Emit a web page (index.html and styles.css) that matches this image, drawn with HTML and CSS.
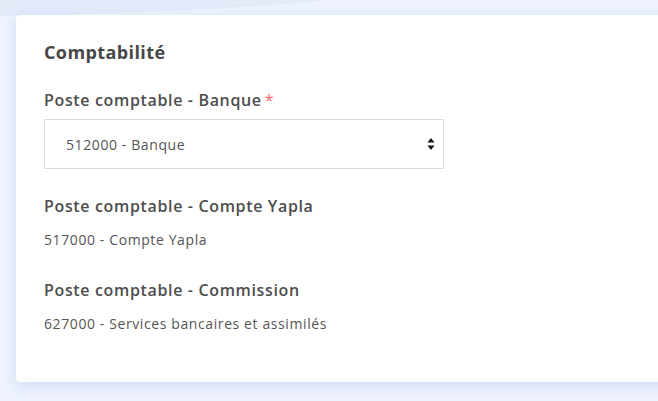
FILE: index.html
```html
<!DOCTYPE html>
<html lang="fr">
<head>
<meta charset="utf-8">
<link rel="stylesheet" href="styles.css">
</head>
<body>
<div class="page">
  <svg class="bg-curve" width="658" height="60" viewBox="0 0 658 60" preserveAspectRatio="none"><path d="M0 0 H330 C250 8 120 14 0 16 Z" fill="#e3ebf9"/></svg>
  <section class="card">
    <h2 class="card-title">Comptabilité</h2>
    <div class="field field-select">
      <label class="label label-select">Poste comptable - Banque<span class="req">*</span></label>
      <div class="select">
        <span class="select-value">512000 - Banque</span>
        <svg class="select-arrows" width="8" height="14" viewBox="0 0 8 14"><path d="M4 1 L7.5 5.5 H0.5 Z" fill="#111"/><path d="M4 13 L7.5 8.5 H0.5 Z" fill="#111"/></svg>
      </div>
    </div>
    <div class="field field-first">
      <div class="label">Poste comptable - Compte Yapla</div>
      <div class="value">517000 - Compte Yapla</div>
    </div>
    <div class="field">
      <div class="label">Poste comptable - Commission</div>
      <div class="value">627000 - Services bancaires et assimilés</div>
    </div>
  </section>
</div>
</body>
</html>
```

FILE: styles.css
```css
html, body {
  margin: 0;
  padding: 0;
}
body {
  width: 658px;
  height: 401px;
  overflow: hidden;
  background: #eef3fd;
  font-family: "Open Sans", "Lato", sans-serif;
  color: #4a4a4a;
}
.page {
  position: relative;
  padding: 15px 0 0 16px;
  height: 401px;
  box-sizing: border-box;
}
.bg-curve {
  position: absolute;
  left: 0;
  top: 0;
}
.card {
  position: relative;
  background: #fff;
  border-radius: 4px;
  box-shadow: 0 4px 14px rgba(170, 190, 235, 0.45);
  width: 660px;
  height: 367px;
  box-sizing: border-box;
  padding: 25px 24px 0 28px;
}
.card-title {
  margin: 0 0 25px 0;
  font-size: 18px;
  font-weight: 700;
  line-height: 24px;
  letter-spacing: 0.4px;
  color: #474747;
}
.field-select {
  margin-bottom: 26px;
}
.field-first {
  margin-bottom: 29px;
}
.label {
  display: block;
  font-size: 16px;
  font-weight: 600;
  line-height: 22px;
  letter-spacing: 0.65px;
  color: #4d4d4d;
  margin-bottom: 13px;
}
.label-select {
  margin-bottom: 8px;
}
.req {
  color: #ff6b6b;
  margin-left: 3px;
  font-weight: 400;
}
.select {
  width: 400px;
  height: 50px;
  box-sizing: border-box;
  border: 1px solid #d6dde9;
  display: flex;
  align-items: center;
  justify-content: space-between;
  padding: 0 8px 0 21px;
}
.select-value {
  font-size: 14px;
  letter-spacing: 0.6px;
  color: #555;
}
.value {
  font-size: 14px;
  letter-spacing: 0.6px;
  color: #555;
  line-height: 20px;
}
```
